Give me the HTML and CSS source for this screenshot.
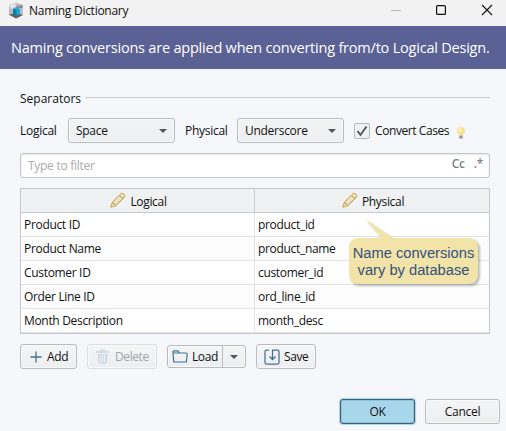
FILE: index.html
```html
<!DOCTYPE html>
<html lang="en">
<head>
<meta charset="utf-8">
<title>Naming Dictionary</title>
<link rel="stylesheet" href="styles.css">
</head>
<body>
<div class="window">
  <header class="titlebar">
    <svg class="app-icon" width="16" height="17" viewBox="0 0 16 17"><path d="M1 3 7 0.5 15 3v10L8 16.5 1 13z" fill="#b9bdc0"/><path d="M1 3 7 .5l1 4-5 2.500z" fill="#e4e6e8"/><path d="M8 4.500 14.500 3v3L9 6z" fill="#858b90"/><path d="M1 12.500 8 11l7 2-7 3.500z" fill="#5b6165"/><path d="M5 7 8.500 5.500 12 7v5l-3.500 1.500L5 12z" fill="#20a7d3"/><path d="m5 7 3.500 1v5.500L5 12z" fill="#087ea9"/></svg>
    <h1 class="title">Naming Dictionary</h1>
    <svg class="controls" width="106" height="16" viewBox="0 0 106 16" fill="none"><path d="M1 8.500h10" stroke="#bbb"/><rect x="46.600" y="3.600" width="8.800" height="8.800" rx="1" stroke="#111" stroke-width="1.200"/><path d="m92 3 10 10M102 3 92 13" stroke="#111" stroke-width="1.100"/></svg>
  </header>
  <div class="banner"><span>Naming conversions are applied when converting from/to Logical Design.</span></div>
  <main class="content">
    <div class="section"><span class="section-title">Separators</span></div>
    <div class="options">
      <span class="lbl lbl-logical">Logical</span>
      <div class="combo"><span class="t-space">Space</span><i class="arrow"></i></div>
      <span class="lbl lbl-physical">Physical</span>
      <div class="combo"><span class="t-under">Underscore</span><i class="arrow"></i></div>
      <div class="check"><svg width="14" height="14" viewBox="0 0 14 14"><path d="m2.500 7 3 4L11.500 2.500" fill="none" stroke="#555" stroke-width="1.900"/></svg></div>
      <span class="convert">Convert Cases</span>
      <svg class="bulb" width="10" height="14" viewBox="0 0 10 14"><path d="M5 1a4 4 0 0 1 4 4c0 2-1.600 2.500-2 4H3C2.600 7.500 1 7 1 5a4 4 0 0 1 4-4z" fill="#fbe087"/><circle cx="4" cy="4" r="2" fill="#fff3bd"/><path d="M3.200 9.500h3.600V12l-1 .8H4.200l-1-.8z" fill="#9c99b0"/></svg>
    </div>
    <div class="filter"><span class="placeholder">Type to filter</span><b class="cc">Cc</b><b class="rx">.*</b></div>
    <div class="grid">
      <div class="row head">
        <div class="cell"><svg class="pencil" width="16" height="16" viewBox="0 0 16 16"><path d="M1 15 2.300 10.500 11 1.800q1-1 2 0l1.200 1.200q1 1 0 2L5.500 13.700zM2.300 10.500l3.200 3.200M9.500 3.300l3.200 3.200" fill="none" stroke="#cfa850" stroke-width="1.150"/><path d="m4 12 7-7" stroke="#dcc285" stroke-width=".7"/></svg><span class="h-logical">Logical</span></div>
        <div class="cell"><svg class="pencil" width="16" height="16" viewBox="0 0 16 16"><path d="M1 15 2.300 10.500 11 1.800q1-1 2 0l1.200 1.200q1 1 0 2L5.500 13.700zM2.300 10.500l3.200 3.200M9.500 3.300l3.200 3.200" fill="none" stroke="#cfa850" stroke-width="1.150"/><path d="m4 12 7-7" stroke="#dcc285" stroke-width=".7"/></svg><span class="h-physical">Physical</span></div>
      </div>
      <div class="row"><div class="cell">Product ID</div><div class="cell">product_id</div></div>
      <div class="row"><div class="cell">Product Name</div><div class="cell">product_name</div></div>
      <div class="row"><div class="cell">Customer ID</div><div class="cell">customer_id</div></div>
      <div class="row"><div class="cell">Order Line ID</div><div class="cell">ord_line_id</div></div>
      <div class="row"><div class="cell">Month Description</div><div class="cell">month_desc</div></div>
      <div class="callout">
        <svg class="bubble" width="134" height="72" viewBox="0 0 134 72"><path d="M10 20H33L16 1 44 20H119Q129 20 129 30V56Q129 66 119 66H10Q0 66 0 56V30Q0 20 10 20Z" fill="#f2e3a8"/></svg>
        <p class="note">Name conversions<br>vary by database</p>
      </div>
    </div>
    <div class="actions">
      <div class="btn add"><svg width="12" height="12" viewBox="0 0 12 12"><path d="M6 .5v11M.5 6h11" stroke="#42718f" stroke-width="1.300"/></svg><span>Add</span></div>
      <div class="btn delete"><svg width="13" height="15" viewBox="0 0 13 15"><path d="M4 2V.500h5V2h4v2H0V2zM1.500 5h10l-1 9.500h-8z" fill="#d0dbe4"/><path d="M4.500 6v7M6.500 6v7M8.500 6v7" stroke="#f2f5f8" stroke-width=".8"/></svg><span>Delete</span></div>
      <div class="btn load"><svg width="16" height="13" viewBox="0 0 16 13"><path d="M1 3V1.500L2 .8h4L7.500 3h6.700q1 0 1 1L14.400 12H1.800L1 4q0-1 1-1h5.500" fill="none" stroke="#42718f" stroke-width="1.200"/></svg><span>Load</span><div class="split"><i class="arrow"></i></div></div>
      <div class="btn save"><svg width="16" height="16" viewBox="0 0 16 16"><path d="M5 1H2.500Q1 1 1 2.500v11Q1 15 2.500 15h11q1.500 0 1.500-1.500v-11Q15 1 13.500 1H8.500v9M5.500 7.500l3 3 3-3" fill="none" stroke="#42718f" stroke-width="1.250"/></svg><span>Save</span></div>
    </div>
    <footer class="footer"><div class="btn ok"><span>OK</span></div><div class="btn cancel"><span>Cancel</span></div></footer>
  </main>
</div>
</body>
</html>
```
FILE: styles.css
```css
* { box-sizing: border-box; }
body { margin: 0; background: #f5f7fa; color: #111; font: 12px/16px "Open Sans", "Noto Sans", sans-serif; letter-spacing: -0.28px; white-space: nowrap; }
.window { width: 506px; height: 431px; overflow: hidden; }
svg { display: block; flex: none; }
.titlebar { height: 26px; background: #f2f2f2; display: flex; align-items: flex-start; padding-left: 8px; }
.app-icon { margin-top: 2px; }
.title { margin: 3px 0 0 5px; font: inherit; letter-spacing: -0.27px; }
.controls { margin: 2px 10px 0 auto; }
.banner { height: 43px; background: #5a6295; color: #fff; padding: 12px 0 0 11px; font-size: 14.500px; line-height: 20px; letter-spacing: -0.21px; }
.content { padding: 0 16px 0 20px; }
.section { height: 49px; width: 470px; padding-top: 22px; display: flex; align-items: flex-start; letter-spacing: 0; }
.section::after { content: ""; flex: 1; height: 1px; background: #c8cccf; margin: 6px 0 0 4px; }
.options { display: flex; align-items: center; height: 25px; }
.lbl-logical { width: 48px; }
.lbl-physical { width: 52px; margin-left: 10px; }
.combo { width: 107px; height: 25px; border: 1px solid #b9bcbf; border-radius: 3px; background: linear-gradient(#f3f4f6, #eceef0); display: flex; align-items: center; padding: 0 7px; justify-content: space-between; box-shadow: inset 0 0 0 1px #f8f9fa; }
.arrow { display: block; width: 0; height: 0; border: 4px solid transparent; border-top-color: #555; border-bottom: 0; }
.check { width: 16px; height: 16px; margin-left: 10px; border: 1px solid #b5b7b9; border-radius: 2px; background: #f0f1f2; }
.convert { margin-left: 5px; width: 81px; letter-spacing: -0.42px; }
.bulb { margin: 4px 0 0 0; }
.filter { margin-top: 10px; width: 470px; height: 25px; border: 1px solid #c4c7ca; border-radius: 3px; background: #fff; display: flex; align-items: center; padding: 0 6px 0 7px; box-shadow: inset 0 1px 2px #e5e5e5; }
.placeholder { color: #aaa; flex: 1; }
.cc, .rx { color: #777f86; font-size: 12px; font-weight: 600; margin-top: -3px; }
.rx { margin-left: 9px; }
.grid { position: relative; margin-top: 10px; width: 470px; height: 146px; border: 1px solid #c5c8ca; box-shadow: inset 0 0 0 1px #e9ebed; }
.row { height: 24px; display: flex; background: #fff; border-bottom: 1px solid #e1e3e5; }
.row:nth-child(odd) { background: #fcfcfc; }
.cell { width: 234px; padding: 4px 3px 0; border-right: 1px solid #e1e3e5; letter-spacing: -0.32px; }
.row .cell:last-of-type { border-right: 0; }
.row.head { background: #eff1f3; border-color: #c8cbce; }
.head .cell { display: flex; justify-content: center; gap: 4px; border-color: #c8cbce; padding: 5px 2px 0 4px; }
.pencil { margin-top: -2px; }
.callout { position: absolute; left: 328px; top: 29px; width: 134px; height: 72px; }
.bubble { position: absolute; inset: 0; overflow: visible; filter: drop-shadow(2px 2px 1px #0004); }
.note { position: absolute; left: 0; top: 27px; margin: 0; width: 129px; text-align: center; color: #34517d; font: 14.700px/17px "Liberation Sans", Arial, sans-serif; letter-spacing: 0; }
.actions { display: flex; align-items: center; gap: 10px; margin-top: 10px; height: 25px; }
.btn { height: 25px; border: 1px solid #b9bcbf; border-radius: 3px; background: linear-gradient(#f4f5f6, #eceef0); display: flex; align-items: center; box-shadow: inset 0 0 0 1px #f8f9fa; }
.add { width: 57px; padding-left: 9px; gap: 5px; }
.delete { width: 70px; padding-left: 8px; gap: 6px; color: #a4a6a8; border-color: #dcdee0; letter-spacing: -0.4px; }
.load { width: 79px; height: 23px; padding-left: 4px; gap: 4px; letter-spacing: -0.4px; }
.split { margin-left: auto; flex: none; width: 24px; height: 21px; border-left: 1px solid #b9bcbf; display: flex; align-items: center; justify-content: center; }
.save { width: 60px; padding-left: 7px; gap: 4px; letter-spacing: -0.4px; }
.footer { display: flex; justify-content: flex-end; gap: 10px; margin: 30px -10px 0 0; }
.footer .btn { width: 75px; justify-content: center; }
.footer .ok { background: #a8d6eb; border-color: #3e6275; box-shadow: 0 0 1px 1px #a9d2e4, inset 0 0 0 1px #91c2d8; }
```
